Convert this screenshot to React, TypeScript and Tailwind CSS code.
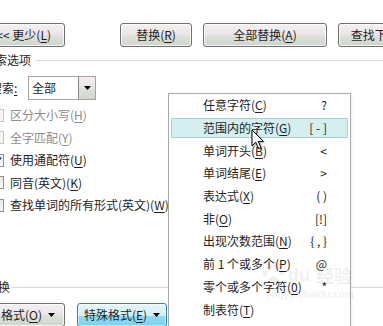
import React from "react";

function Acc({ text }: { text: string }) {
  const m = text.match(/^(.*\()(.)(\).*)$/);
  if (!m) return <>{text}</>;
  return (
    <>
      {m[1]}
      <span className="underline underline-offset-[2px]">{m[2]}</span>
      {m[3]}
    </>
  );
}

function Btn({
  className = "",
  active = false,
  children,
}: {
  className?: string;
  active?: boolean;
  children: React.ReactNode;
}) {
  return (
    <div
      className={`shrink-0 h-[24px] rounded-[3px] border flex items-center whitespace-nowrap ${
        active
          ? "border-[#3c7fb1] bg-[linear-gradient(to_bottom,#e4f5f8_0%,#d4eff3_52%,#92d9f3_56%,#7ad2f3_100%)] shadow-[inset_0_0_0_1px_rgba(255,255,255,0.5)]"
          : "border-[#707070] bg-[linear-gradient(to_bottom,#f4eff1_0%,#ece5e7_48%,#dde2da_52%,#cfd5cc_100%)] shadow-[inset_0_0_0_1px_rgba(255,255,255,0.75)]"
      } ${className}`}
    >
      {children}
    </div>
  );
}

function Check({
  label,
  checked = false,
  disabled = false,
}: {
  label: string;
  checked?: boolean;
  disabled?: boolean;
}) {
  return (
    <div className="flex items-center h-[22.5px] -ml-[9px]">
      <div
        className={`shrink-0 w-[13px] h-[13px] border flex items-center justify-center ${
          disabled
            ? "border-[#c4c4c4] bg-[#f4f4f4]"
            : "border-[#8e8f8f] bg-[linear-gradient(135deg,#dcdcdc,#fbfbfb)]"
        }`}
      >
        {checked && (
          <svg width="9" height="9" viewBox="0 0 9 9">
            <path d="M1 4.5 L3.5 7 L8 1.5" fill="none" stroke="#1e3a6e" strokeWidth="1.8" />
          </svg>
        )}
      </div>
      <span className={`ml-[6px] whitespace-nowrap ${disabled ? "text-[#8c8c8c]" : "text-[#1e1e1e]"}`}>
        <Acc text={label} />
      </span>
    </div>
  );
}

const items: [string, string][] = [
  ["任意字符(C)", "?"],
  ["范围内的字符(G)", "[ - ]"],
  ["单词开头(B)", "<"],
  ["单词结尾(E)", ">"],
  ["表达式(X)", "( )"],
  ["非(O)", "[!]"],
  ["出现次数范围(N)", "{ , }"],
  ["前 1 个或多个(P)", "@"],
  ["零个或多个字符(0)", "*"],
  ["制表符(T)", ""],
];

function Arrow() {
  return (
    <svg width="7" height="4" viewBox="0 0 7 4">
      <path d="M0 0 L7 0 L3.5 4 Z" fill="#000" />
    </svg>
  );
}

export default function App() {
  return (
    <div className="relative w-[383px] h-[326px] overflow-hidden bg-white text-[12px] leading-none text-[#1e1e1e] font-['Noto_Sans_CJK_SC','Microsoft_YaHei',sans-serif]">
      <div className="flex flex-col pt-[23px]">
        {/* top buttons */}
        <div className="flex -ml-[16px]">
          <Btn className="w-[81px] justify-end pr-[13px]">
            <span>
              &lt;&lt; 更少(<span className="underline underline-offset-[2px]">L</span>)
            </span>
          </Btn>
          <Btn className="w-[72px] ml-[55px] justify-center">
            <Acc text="替换(R)" />
          </Btn>
          <Btn className="w-[124px] ml-[11px] justify-center">
            <Acc text="全部替换(A)" />
          </Btn>
          <Btn className="w-[100px] ml-[11px] justify-center">
            <Acc text="查找下一处(F)" />
          </Btn>
        </div>

        {/* search options header */}
        <div className="flex items-center h-[16px] mt-[5px] -ml-[17px]">
          <span className="whitespace-nowrap">搜索选项</span>
          <div className="flex-1 h-px bg-[#d5d5dc] ml-[5px]" />
        </div>

        {/* search select */}
        <div className="flex items-center mt-[8px] -ml-[10px]">
          <span className="w-[38px] shrink-0 whitespace-nowrap">
            搜索<span className="underline underline-offset-[2px]">:</span>
          </span>
          <div className="flex h-[24px] w-[68px] border border-[#a3a3a3] bg-white">
            <div className="flex-1 flex items-center pl-[3px]">全部</div>
            <div className="w-[17px] h-full border-l border-[#8a8a8a] bg-[linear-gradient(to_bottom,#f4eef0_0%,#ebe4e6_48%,#dde2da_52%,#d0d6cd_100%)] flex items-center justify-center">
              <Arrow />
            </div>
          </div>
        </div>

        {/* checkboxes */}
        <div className="flex flex-col mt-[3.75px]">
          <Check label="区分大小写(H)" disabled />
          <Check label="全字匹配(Y)" disabled />
          <Check label="使用通配符(U)" checked />
          <Check label="同音(英文)(K)" />
          <Check label="查找单词的所有形式(英文)(W)" />
        </div>

        {/* replace header */}
        <div className="flex items-center h-[16px] mt-[62.75px] -ml-[14px]">
          <span className="whitespace-nowrap">替换</span>
          <div className="flex-1 h-px bg-[#d5d5dc] ml-[2px]" />
        </div>

        {/* bottom buttons */}
        <div className="flex mt-[8px] -ml-[15px]">
          <Btn className="w-[80px] justify-end pr-[9px]">
            <span className="flex items-center gap-[6px]">
              <span>
                <Acc text="格式(O)" />
              </span>
              <Arrow />
            </span>
          </Btn>
          <Btn className="w-[90px] ml-[12px] justify-center" active>
            <span className="flex items-center gap-[6px]">
              <span>
                <Acc text="特殊格式(E)" />
              </span>
              <Arrow />
            </span>
          </Btn>
        </div>
      </div>

      {/* popup menu */}
      <div className="absolute left-[168px] top-[93px] w-[183px] h-[260px] border border-[#a8a8a8] bg-white flex flex-col shadow-[1px_1px_2px_rgba(0,0,0,0.08)]">
        {items.map(([label, sc], i) => (
          <div key={label} className="h-[22.7px] shrink-0 px-[2px] py-[1px]">
            <div
              className={`h-full flex items-center justify-between pl-[31px] pr-[20px] border ${
                i === 1 ? "bg-[#d5eff1] border-[#a6d3d9]" : "border-transparent"
              }`}
            >
              <span className="whitespace-nowrap">
                <Acc text={label} />
              </span>
              <span className="whitespace-pre">{sc}</span>
            </div>
          </div>
        ))}
      </div>

      {/* watermark */}
      <div className="absolute left-[262px] top-[262px] pointer-events-none select-none flex flex-col items-start text-[#000] opacity-[0.06]">
        <div className="flex items-end gap-[2px]">
          <svg width="24" height="22" viewBox="0 0 24 22">
            <ellipse cx="7" cy="5" rx="3" ry="4" fill="#000" />
            <ellipse cx="15" cy="4" rx="3" ry="4" fill="#000" />
            <ellipse cx="3" cy="11" rx="2.5" ry="3" fill="#000" />
            <ellipse cx="20" cy="10" rx="2.5" ry="3" fill="#000" />
            <path d="M5 20 Q11 8 18 20 Z" fill="#000" />
          </svg>
          <span className="text-[18px] font-bold leading-none font-['Liberation_Sans',sans-serif]">du</span>
          <span className="text-[18px] font-bold leading-none ml-[4px]">经验</span>
        </div>
        <span className="mt-[6px] ml-[4px] text-[10px] font-bold font-['Liberation_Sans',sans-serif]">jingyan.baidu.com</span>
      </div>

      {/* mouse cursor */}
      <svg
        className="absolute left-[251px] top-[129px] drop-shadow-[1px_1px_1px_rgba(0,0,0,0.35)]"
        width="14"
        height="21"
        viewBox="0 0 14 21"
      >
        <path
          d="M1 1 L1 17 L4.8 13.3 L7.6 19.6 L10 18.6 L7.2 12.4 L12.4 12.4 Z"
          fill="#fff"
          stroke="#000"
          strokeWidth="1"
          strokeLinejoin="miter"
        />
      </svg>
    </div>
  );
}
